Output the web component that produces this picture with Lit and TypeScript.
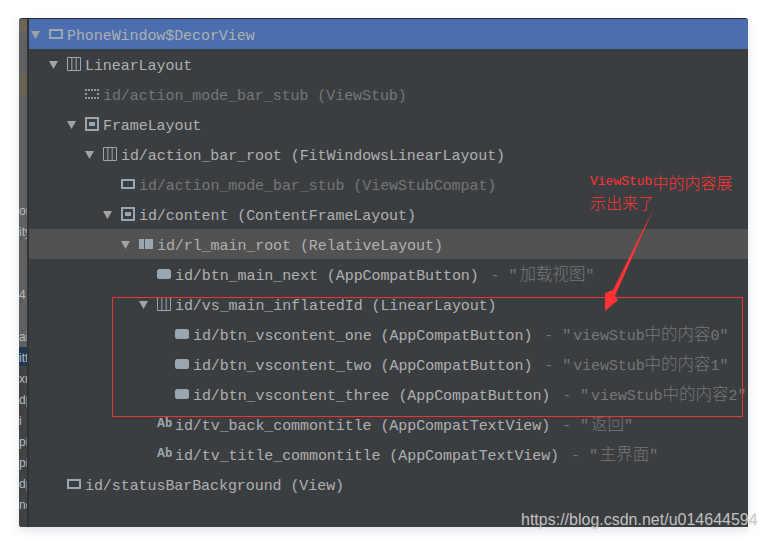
import { LitElement, html, css, svg } from "lit";
import { customElement } from "lit/decorators.js";

type Kind = "rect" | "linear" | "stub" | "frame" | "relative" | "button" | "ab";
interface Row {
  level: number;
  open?: boolean;
  icon: Kind;
  name: string;
  dim?: boolean;
  value?: string;
  state?: "selected" | "hover";
}

const rows: Row[] = [
  { level: 0, open: true, icon: "rect", name: "PhoneWindow$DecorView", state: "selected" },
  { level: 1, open: true, icon: "linear", name: "LinearLayout" },
  { level: 2, icon: "stub", name: "id/action_mode_bar_stub (ViewStub)", dim: true },
  { level: 2, open: true, icon: "frame", name: "FrameLayout" },
  { level: 3, open: true, icon: "linear", name: "id/action_bar_root (FitWindowsLinearLayout)" },
  { level: 4, icon: "rect", name: "id/action_mode_bar_stub (ViewStubCompat)", dim: true },
  { level: 4, open: true, icon: "frame", name: "id/content (ContentFrameLayout)" },
  { level: 5, open: true, icon: "relative", name: "id/rl_main_root (RelativeLayout)", state: "hover" },
  { level: 6, icon: "button", name: "id/btn_main_next (AppCompatButton)", value: "加载视图" },
  { level: 6, open: true, icon: "linear", name: "id/vs_main_inflatedId (LinearLayout)" },
  { level: 7, icon: "button", name: "id/btn_vscontent_one (AppCompatButton)", value: "viewStub中的内容0" },
  { level: 7, icon: "button", name: "id/btn_vscontent_two (AppCompatButton)", value: "viewStub中的内容1" },
  { level: 7, icon: "button", name: "id/btn_vscontent_three (AppCompatButton)", value: "viewStub中的内容2" },
  { level: 6, icon: "ab", name: "id/tv_back_commontitle (AppCompatTextView)", value: "返回" },
  { level: 6, icon: "ab", name: "id/tv_title_commontitle (AppCompatTextView)", value: "主界面" },
  { level: 1, icon: "rect", name: "id/statusBarBackground (View)" },
];

const stripLines = ["", "", "", "", "", "", "", "", "", "ou", "ity", "", "", "4", "", "ai", "itt", "xr", "dp", "i", "pi", "pi", "dp", "nd"];

const cjkSplit = (s: string) =>
  s.split(/([\u4e00-\u9fff]+)/).map((p, i) => (i % 2 ? html`<span class="cjk">${p}</span>` : p));

const glyph = (k: Kind) => {
  switch (k) {
    case "rect":
      return svg`<rect x="1" y="3" width="12" height="8" fill="none" stroke="currentColor" stroke-width="2"/>`;
    case "linear":
      return svg`<path d="M.5.5h13v13H.5zM4.83.5v13M9.17.5v13" fill="none" stroke="currentColor"/>`;
    case "stub":
      return svg`<path d="M0 2h2v2H0zM3 2h2v2H3zM6 2h2v2H6zM9 2h2v2H9zM12 2h2v2h-2zM0 6h2v2H0zM12 6h2v2h-2zM0 10h2v2H0zM3 10h2v2H3zM6 10h2v2H6zM9 10h2v2H9zM12 10h2v2h-2z" fill="currentColor" opacity=".85"/>`;
    case "frame":
      return svg`<rect x="1" y="1" width="12" height="12" fill="none" stroke="currentColor" stroke-width="2"/><rect x="4" y="5" width="6" height="4" fill="currentColor"/>`;
    case "relative":
      return svg`<path d="M0 2h5v10H0zM6 2h8v10H6z" fill="currentColor"/>`;
    case "button":
      return svg`<rect x="0" y="2" width="14" height="10" rx="2.5" fill="currentColor"/>`;
    default:
      return svg``;
  }
};

@customElement("app-root")
export class AppRoot extends LitElement {
  static styles = css`
    :host {
      display: block;
      position: relative;
      width: 766px;
      height: 540px;
      background: #fff;
      overflow: hidden;
    }
    .page {
      padding: 18px 18px 13px 19px;
      height: 540px;
      box-sizing: border-box;
    }
    .window {
      display: flex;
      height: 509px;
      background: #3b3e41;
      border-top: 1px solid #2a2a2a;
      box-sizing: border-box;
      border-radius: 3px 3px 0 3px;
      box-shadow: 0 4px 10px rgba(70, 90, 110, 0.16);
      overflow: hidden;
    }
    .strip {
      flex: none;
      width: 8px;
      overflow: hidden;
      border-right: 2px solid #313233;
      background: linear-gradient(
        #6a6555 0, #6a6555 13px, #5f6061 13px, #5f6061 55px, #666353 55px, #666353 76px,
        #5f6061 76px, #5f6061 328px, #1e3a55 328px, #1e3a55 347px, #404244 347px
      );
      font: 12px/21px "Liberation Sans", sans-serif;
      color: #b9bcbe;
    }
    .strip-line {
      height: 21px;
      white-space: nowrap;
    }
    .strip-lines {
      margin-top: -7px;
    }
    .tree {
      flex: 1;
      min-width: 0;
      overflow: hidden;
    }
    .row {
      display: flex;
      align-items: center;
      height: 30px;
      color: #b0b0b0;
      white-space: nowrap;
    }
    .row.selected {
      background: #4b6eaf;
    }
    .row.hover {
      background: #525252;
    }
    .tri {
      flex: none;
      width: 18px;
      height: 30px;
      padding-top: 2px;
      box-sizing: border-box;
      display: flex;
      align-items: center;
      color: #a3a3a3;
    }
    .icon {
      flex: none;
      width: 14px;
      height: 14px;
      margin-right: 4px;
      color: #9aa7b0;
      display: block;
    }
    .ab {
      flex: none;
      width: 14px;
      margin-right: 4px;
      margin-top: -2px;
      color: #9aa7b0;
      font: bold 11.5px/14px "Open Sans", sans-serif;
    }
    .text {
      padding-top: 6px;
      font: 15px/30px "Liberation Mono", "Noto Sans CJK SC", monospace;
      letter-spacing: -0.07px;
    }
    .dim,
    .val {
      color: #767676;
    }
    .val {
      margin-left: 3px;
    }
    .dash {
      margin-right: 0;
    }
    .quote {
      margin-right: 2px;
    }
    .cjk {
      font-family: "Noto Sans CJK SC", sans-serif;
      font-size: 16.5px;
      line-height: 1;
      font-weight: 300;
      letter-spacing: 0;
    }
    .redbox {
      position: absolute;
      left: 112px;
      top: 297px;
      width: 631px;
      height: 120px;
      box-sizing: border-box;
      border: 1px solid #ee3338;
    }
    .note {
      position: absolute;
      left: 590px;
      top: 172px;
      width: 150px;
      color: #ff3333;
      font: 13px/20px "Liberation Mono", monospace;
    }
    .note-line {
      display: flex;
      align-items: center;
      height: 20px;
      white-space: nowrap;
    }
    .note-line span {
      font: 300 16px/20px "Noto Sans CJK SC", sans-serif;
    }
    .arrow {
      position: absolute;
      left: 600px;
      top: 205px;
    }
    .mark {
      position: absolute;
      left: 521px;
      top: 511px;
      font: 16px/18px "Liberation Sans", sans-serif;
      color: rgba(205, 205, 205, 0.92);
      text-shadow: 0 1px 1px rgba(120, 120, 120, 0.25);
      white-space: nowrap;
    }
  `;

  private renderRow(r: Row) {
    return html`<div class="row ${r.state ?? ""}" style="padding-left:${2 + r.level * 18}px">
      <span class="tri">
        ${r.open
          ? html`<svg width="9" height="8" viewBox="0 0 9 8"><path d="M0 0h9L4.500 8z" fill="currentColor" /></svg>`
          : ""}
      </span>
      ${r.icon === "ab"
        ? html`<span class="ab">Ab</span>`
        : html`<svg class="icon" viewBox="0 0 14 14">${glyph(r.icon)}</svg>`}
      <span class="text"
        ><span class="${r.dim ? "dim" : ""}">${r.name}</span>${r.value
          ? html`<span class="val">&nbsp;<span class="dash">-</span> <span class="quote">"</span>${cjkSplit(r.value)}"</span>`
          : ""}</span
      >
    </div>`;
  }

  render() {
    return html`
      <div class="page">
        <div class="window">
          <div class="strip">
            <div class="strip-lines">
              ${stripLines.map((t) => html`<div class="strip-line">${t}</div>`)}
            </div>
          </div>
          <div class="tree">${rows.map((r) => this.renderRow(r))}</div>
        </div>
      </div>
      <div class="redbox"></div>
      <div class="note">
        <div class="note-line">ViewStub<span>中的内容展</span></div>
        <div class="note-line"><span>示出来了</span></div>
      </div>
      <svg class="arrow" width="60" height="110" viewBox="600 205 60 110">
        <path d="M654 208L613 290L605 293L605 311L618 300L615 296Z" fill="#ff3333" />
      </svg>
      <div class="mark">https://blog.csdn.net/u014644594</div>
    `;
  }
}
